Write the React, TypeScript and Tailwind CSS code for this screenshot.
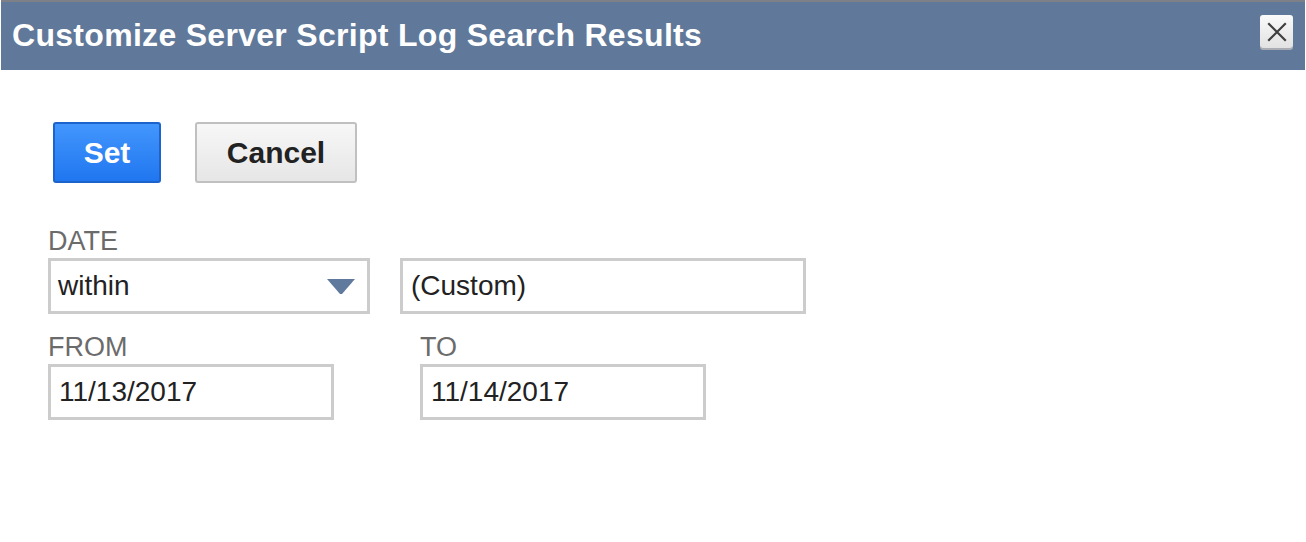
export default function App() {
  return (
    <div className="h-[542px] w-[1306px] bg-white px-px font-['Liberation_Sans',Arial,sans-serif]">
      <header className="flex h-[70px] items-start justify-between border-t-2 border-[#7d8087] bg-[#607899] pl-[11px] pr-[12px]">
        <h1 className="pt-[17px] text-[32px] font-bold leading-[32px] tracking-[0.3px] text-white">
          Customize Server Script Log Search Results
        </h1>
        <button
          aria-label="Close"
          className="mt-[13px] flex h-[33px] w-[33px] items-center justify-center rounded-[3px] bg-gradient-to-b from-[#fafafa] to-[#e2e2e2] shadow-[0_2px_0_#a9adb3]"
        >
          <svg width="22" height="22" viewBox="0 0 22 22">
            <path d="M3 3 L19 19 M19 3 L3 19" stroke="#3f3f3f" strokeWidth="2.2" strokeLinecap="square" />
          </svg>
        </button>
      </header>

      <main className="px-[47px] pt-[52px]">
        <div className="ml-[5px] flex gap-[34px]">
          <button className="h-[61px] w-[108px] rounded-[3px] border-2 border-[#1c63cb] bg-gradient-to-b from-[#4396fd] to-[#1f76ef] text-[30px] font-bold text-white">
            Set
          </button>
          <button className="h-[61px] w-[162px] rounded-[3px] border-2 border-[#c0c0c0] bg-gradient-to-b from-[#f7f7f7] to-[#e6e6e6] text-[30px] font-bold text-[#222]">
            Cancel
          </button>
        </div>

        <div className="mt-[44px]">
          <div className="text-[27px] leading-[28px] text-[#6b6b6b]">DATE</div>
          <div className="mt-[3px] flex gap-[30px]">
            <div className="flex h-[56px] w-[322px] items-center justify-between border-[3px] border-[#cccccc] pl-[7px] pr-[12px]">
              <span className="text-[28px] text-[#222]">within</span>
              <svg width="28" height="15" viewBox="0 0 28 15">
                <polygon points="0,0 28,0 15,15 13,15" fill="#5f7a9c" />
              </svg>
            </div>
            <div className="flex h-[56px] w-[406px] items-center border-[3px] border-[#cccccc] pl-[8px]">
              <span className="text-[28px] text-[#222]">(Custom)</span>
            </div>
          </div>
        </div>

        <div className="mt-[19px] flex gap-[86px]">
          <DateField label="FROM" value="11/13/2017" />
          <DateField label="TO" value="11/14/2017" />
        </div>
      </main>
    </div>
  );
}

function DateField({ label, value }: { label: string; value: string }) {
  return (
    <div className="w-[286px]">
      <div className="text-[27px] leading-[28px] text-[#6b6b6b]">{label}</div>
      <div className="mt-[3px] flex h-[56px] items-center border-[3px] border-[#cccccc] pl-[8px]">
        <span className="text-[28px] text-[#222]">{value}</span>
      </div>
    </div>
  );
}
